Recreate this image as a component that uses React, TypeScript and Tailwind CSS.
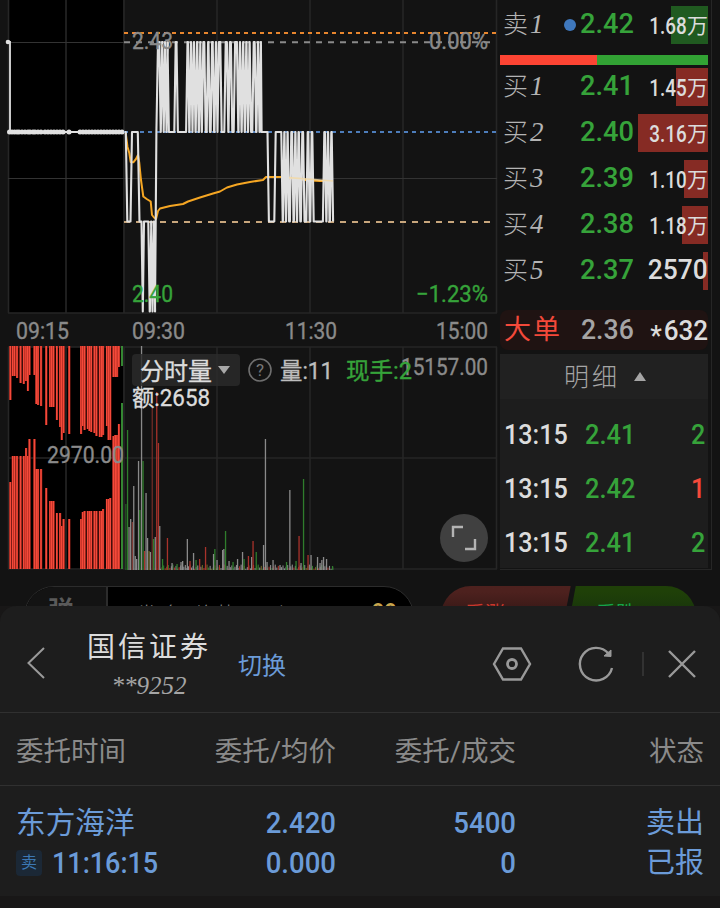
import { Fragment } from 'react';

const GREEN = '#36a33a';
const LINE = '#e0e0e0';
const GRID = '#262626';

const TOP = 42;
const MID = 132;
const LOW = 221.5;
const BOTTOM = 311.5;

// each x is a flip between the two levels of that stretch
const dipFlips = [149, 150.6, 151.8, 153.2, 154.4];

const highFlips = [
  160, 161.5, 163, 164.4, 165.8, 167.2, 168.2, 175, 177.2, 186.8, 188.6, 190.2, 191.8, 193.2, 194.8, 196.4,
  198, 199.6, 201, 202.6, 205, 207.4, 209.2, 211.4, 213.4, 215.2, 216.8, 218.2, 221, 225, 227.6, 229.2,
  231.6, 234.4, 237.6, 239.2, 240.8, 242.4, 244, 245.6, 247.2, 248.8, 250.4, 253, 255.4, 257.2, 258.8, 260.2,
];

const lowFlips = [
  268.2, 275, 282, 283.6, 285.2, 286.8, 288.4, 290.6, 292.8, 294.6, 296.2, 297.8, 299.6, 301.6, 303.8, 307,
  309, 311, 313, 323.6, 325.6, 327.2, 328.8, 330.6, 332.4,
];

const toggles = (xs: number[], from: number, to: number) =>
  xs
    .map((x, i) => {
      const [a, b] = i % 2 === 0 ? [from, to] : [to, from];
      return `L${x - 0.7} ${a} L${x + 0.7} ${b}`;
    })
    .join(' ');

const pricePath = [
  `M125 ${MID} L125.8 ${MID} L127.3 ${LOW} L130.5 ${LOW} L132 ${MID} L137.8 ${MID} L139.5 ${LOW} L141.5 ${LOW}`,
  `L142.8 ${BOTTOM} L144 ${LOW}`,
  toggles(dipFlips, LOW, BOTTOM),
  `L155 ${BOTTOM} L156.4 ${MID} L158 ${TOP}`,
  toggles(highFlips.slice(0, 7), TOP, MID),
  toggles(highFlips.slice(7), MID, TOP),
  `L261.6 ${MID}`,
  toggles(lowFlips, MID, LOW),
].join(' ');

const averagePath =
  'M125.7 133 L127.5 147 L129.3 153 L130.7 162 L133.3 162.3 L136 159 L138 155 L139.3 163 L141 180 L143.3 196.5 L146.7 199 L150.7 201.5 L152 215 L154 217.5 L156 219 L158 211 L160 208.5 L170 206 L183 204 L188 201.5 L200 197.5 L213 193.5 L220 191.5 L227 187.5 L237 184.5 L250 182 L263 180 L266 177 L283 177 L293 178.5 L307 180.3 L320 181 L333 181';

const preDots = [
  9.5, 12, 14.5, 17, 19, 22, 25, 28, 30, 33, 35, 38, 41, 45, 48, 51, 54, 57, 60, 63, 69, 80, 83, 86, 89, 92, 95,
  98, 101, 104, 107, 110, 113, 116, 119, 122,
];

// [x, end of the upper bar, start of the lower bar]
const auction = [
  [10.3, 400, 482], [12.7, 376, 456], [14.5, 376, 456], [17, 378, 456], [20.5, 383, 456], [23.7, 384, 456],
  [26, 381, 448], [27.8, 391, 456], [29.4, 375, 439], [34.4, 375, 439], [36.3, 404, 469], [38, 405, 469],
  [41, 406, 469], [46.2, 425, 488], [50, 407, 501], [51.7, 407, 501], [53.4, 407, 501], [56.8, 420, 513],
  [60, 427, 513], [61.7, 440, 526], [63.5, 433, 519], [69.2, 434, 519], [81, 434, 519], [82.7, 426, 512],
  [84.5, 430, 511], [87.7, 429, 511], [89.4, 431, 511], [91.2, 432, 511], [94.4, 433, 511], [96.4, 436, 511],
  [99.7, 437, 511], [101.4, 437, 511], [103, 435, 509], [106.8, 426, 499], [108.5, 440, 499], [110.2, 440, 498],
  [113.4, 377, 436], [115.2, 377, 435], [117, 377, 435], [118.8, 367, 424],
];

const R = '#a8322b';
const G = '#2f7d2c';
const W = '#8a8a8a';

const volume: [number, number, string][] = [
  [125.8, 504, '#245c22'], [127.5, 430, G], [129, 527, W], [130.6, 519, W], [132.3, 522, '#7c3a35'], [133.7, 486, W],
  [135.2, 556, W], [136.6, 559, W], [138.5, 461, W], [139.8, 510, G], [141.5, 346, W], [143, 461, G],
  [144.6, 551, R], [146, 493, W], [147.5, 538, W], [149, 551, '#6d6424'], [150.4, 552, W], [152.2, 408, '#6e2c27'],
  [153.5, 539, G], [155.2, 537, W], [156.7, 392, R], [158.4, 443, R], [159.7, 526, W], [162.5, 559, G],
  [167.4, 538, R], [172, 563, W], [177, 564, G], [181, 562, W], [182.6, 561, W], [187.3, 539, W],
  [190, 561, R], [193.5, 553, W], [196, 560, G], [199.6, 559, R], [205.5, 547, R], [213.5, 554, W],
  [214.8, 549, G], [217, 560, W], [222.6, 550, W], [223.8, 549, W], [225.5, 531, G], [229, 561, W],
  [233, 562, G], [237.5, 559, W], [242.5, 552, W], [244, 559, G], [248.4, 556, R], [251.6, 557, W],
  [253, 541, R], [256.2, 552, G], [263.5, 545, W], [265.4, 439, W], [267, 562, W], [273, 560, W],
  [280, 565, W], [286.5, 562, G], [289.8, 490, W], [296, 561, G], [299, 536, R], [301, 563, W],
  [303.5, 479, G], [308, 555, R], [311, 555, W], [317.5, 557, W], [320, 563, W], [321.8, 560, W],
  [323.5, 557, W], [326.5, 559, W], [332.5, 566, G],
];

const smallColors = [W, W, G, R, W, '#6d6424', W, R];

const Chart = () => (
  <svg
    viewBox="0 0 499 572"
    className="block h-[572px] w-[499px] shrink-0"
    fontFamily='Roboto, "Noto Sans CJK SC", sans-serif'
    fontSize="23"
  >
    <rect x="9" y="0" width="114" height="313" fill="#000" />
    <rect x="9" y="347" width="114" height="223" fill="#000" />

    {[8.5, 66, 124, 217, 310, 403, 496.5].map((x) => (
      <Fragment key={x}>
        <line x1={x} x2={x} y1="0" y2="313" stroke={GRID} strokeWidth="1.6" />
        <line x1={x} x2={x} y1="347" y2="569" stroke={GRID} strokeWidth="1.6" />
      </Fragment>
    ))}
    <path d="M8 313H497 M8 347H497 M8 458H497 M8 569H497" stroke={GRID} strokeWidth="1.6" />
    <path d="M8 178.5H497 M8 42.5H124" stroke="#333" />

    {/* reference levels */}
    <g strokeWidth="2">
      <path d="M124 33H496" stroke="#e8862e" strokeDasharray="4 4" />
      <path d="M124 42.3H490" stroke="#8a8a8a" strokeDasharray="6 6" />
      <path d="M124 132H496" stroke="#4d7dbb" strokeDasharray="4 4" />
      <path d="M124 222H490" stroke="#c8a67c" strokeDasharray="6 6" />
    </g>

    {/* opening auction price */}
    <path d="M8 42H10V132H123" fill="none" stroke={LINE} strokeWidth="1.8" />
    <circle cx="8" cy="42" r="2.3" fill={LINE} />
    {preDots.map((x) => (
      <circle key={x} cx={x} cy="132" r="2.5" fill={LINE} />
    ))}

    <path d={averagePath} fill="none" stroke="#f5a623" strokeWidth="2" strokeLinejoin="round" />
    <path d={pricePath} fill="none" stroke={LINE} strokeWidth="2.1" strokeLinejoin="round" />
    <path d="M289 177.6L333 181" stroke="#f3d9a4" strokeWidth="1.6" opacity="0.8" />

    <g fill="#8a8a8a" stroke="#8a8a8a" strokeWidth="0.35">
      <text x="132" y="48.5" textLength="41" lengthAdjust="spacingAndGlyphs">2.43</text>
      <text x="429" y="48.5" textLength="59" lengthAdjust="spacingAndGlyphs">0.00%</text>
      <text x="16" y="339" textLength="53" lengthAdjust="spacingAndGlyphs">09:15</text>
      <text x="132" y="339" textLength="53" lengthAdjust="spacingAndGlyphs">09:30</text>
      <text x="285" y="339" textLength="52" lengthAdjust="spacingAndGlyphs">11:30</text>
      <text x="436" y="339" textLength="52" lengthAdjust="spacingAndGlyphs">15:00</text>
    </g>
    <g fill={GREEN} stroke={GREEN} strokeWidth="0.35">
      <text x="132" y="302" textLength="41" lengthAdjust="spacingAndGlyphs">2.40</text>
      <text x="416" y="302" textLength="72" lengthAdjust="spacingAndGlyphs">−1.23%</text>
    </g>

    {/* auction volume */}
    {auction.map(([x, up, down]) => (
      <g key={x}>
        <rect x={x - 1} y="346" width="2.3" height={up - 346} fill="#8d1d14" />
        <rect x={x - 1} y={down} width="2.3" height={569 - down} fill="#8d1d14" />
        <rect x={x - 0.8} y="346" width="1.6" height={up - 346} fill="#f4493a" />
        <rect x={x - 0.8} y={down} width="1.6" height={569 - down} fill="#f4493a" />
      </g>
    ))}
    <path d="M122 346V366M122 403V569" stroke="#3a9538" strokeWidth="1.8" />

    {/* traded volume */}
    {Array.from({ length: 112 }, (_, i) => {
      const x = 160 + i * 1.55;
      const h = 1.2 + ((i * 37) % 11) * 0.42;
      return <rect key={i} x={x} y={570 - h} width="1.1" height={h} fill={smallColors[(i * 5 + (i >> 2)) % 8]} />;
    })}
    {volume.map(([x, y, color]) => (
      <rect key={x} x={x - 0.6} y={y} width="1.3" height={570 - y} fill={color} />
    ))}

    <g fill="#8a8a8a" stroke="#8a8a8a" strokeWidth="0.35">
      <text x="47" y="463" textLength="77" lengthAdjust="spacingAndGlyphs">2970.00</text>
      <text x="401" y="375" textLength="87" lengthAdjust="spacingAndGlyphs">15157.00</text>
    </g>

    {/* volume legend */}
    <rect x="132" y="354" width="108" height="32" rx="4" fill="#2b2b2b" fillOpacity="0.82" />
    <g fill="#dcdcdc" stroke="#dcdcdc" strokeWidth="0.35">
      <text x="140" y="379.5" fontSize="24" textLength="72" lengthAdjust="spacingAndGlyphs">分时量</text>
      <text x="132" y="406" textLength="78" lengthAdjust="spacingAndGlyphs">额:2658</text>
    </g>
    <path d="M218 366H230L224 374Z" fill="#a8a8a8" />
    <circle cx="260" cy="370" r="11" fill="none" stroke="#6e6e6e" strokeWidth="1.6" />
    <text x="260" y="376" fontSize="17" fill="#777" textAnchor="middle">?</text>
    <text x="280" y="379" fill="#bdbdbd" stroke="#bdbdbd" strokeWidth="0.35" textLength="53" lengthAdjust="spacingAndGlyphs">
      量:11
    </text>
    <text x="346" y="379" fill={GREEN} stroke={GREEN} strokeWidth="0.35" textLength="66" lengthAdjust="spacingAndGlyphs">
      现手:2
    </text>

    <circle cx="464" cy="538" r="24" fill="#404040" />
    <path d="M453 537V527H463M475 539V549H465" fill="none" stroke="#b4b4b4" strokeWidth="2.4" />
  </svg>
);

const bids = [
  { n: 1, price: '2.41', vol: '1.45', bar: 'w-8' },
  { n: 2, price: '2.40', vol: '3.16', bar: 'w-[70px]' },
  { n: 3, price: '2.39', vol: '1.10', bar: 'w-6' },
  { n: 4, price: '2.38', vol: '1.18', bar: 'w-[26px]' },
  { n: 5, price: '2.37', vol: '2570', bar: 'w-[5px]' },
];

const trades = [
  { time: '13:15', price: '2.41', vol: '2', color: 'text-[#36a33a]' },
  { time: '13:15', price: '2.42', vol: '1', color: 'text-[#f4493a]' },
  { time: '13:15', price: '2.41', vol: '2', color: 'text-[#36a33a]' },
];

type QuoteProps = { side: string; n: number; price: string; vol: string; bar: string; dot?: boolean };

const Quote = ({ side, n, price, vol, bar, dot }: QuoteProps) => (
  <div className="relative flex h-[38px] items-center pl-[3px]">
    <div className={`absolute inset-y-0 right-0 ${dot ? 'bg-[#205a20]' : 'bg-[#862b24]'} ${bar}`} />
    <span className="w-[61px] pb-0.5 text-[25px] font-light text-[#b4b4b4]">
      {side}
      <span className="pl-0.5 font-['Liberation_Serif'] text-[27px] italic">{n}</span>
    </span>
    {dot && <i className="-mr-3 size-3 shrink-0 rounded-full bg-[#3f78bd]" />}
    <span className="ml-4 w-[52px] origin-left scale-x-[0.97] pb-0.5 text-[28px] font-medium text-[#36a33a]">
      {price}
    </span>
    <span className="relative ml-auto flex items-center text-[#dcdcdc]">
      {vol.includes('.') ? (
        <>
          <span className="origin-right scale-x-[0.82] pt-1 text-[23px] font-medium">{vol}</span>
          <span className="pt-1 text-[21px]">万</span>
        </>
      ) : (
        <span className="origin-right scale-x-[0.94] pb-0.5 text-[28px] font-medium">{vol}</span>
      )}
    </span>
  </div>
);

const OrderBook = () => (
  <div className="ml-px h-[570px] w-[212px] border-r border-b border-[#262626]">
    <div className="w-[208px] pt-1.5">
      <Quote side="卖" n={1} price="2.42" vol="1.68" bar="w-[37px]" dot />
      <div className="mt-[11px] mb-[3px] flex h-[10px]">
        <div className="w-[97px] bg-[#fd4433]" />
        <div className="flex-1 bg-[#32a234]" />
      </div>
      <div className="flex flex-col gap-2">
        {bids.map((bid) => (
          <Quote key={bid.n} side="买" {...bid} />
        ))}
      </div>
      <div className="mt-5 flex h-10 items-center rounded-lg bg-[#1f1312] pl-1 text-[28px] font-medium">
        <span className="w-[77px] text-[27px] font-normal tracking-[2px] text-[#f4493a]">大单</span>
        <span className="w-[56px] origin-left scale-x-[0.95] text-[#a5a5a5]">2.36</span>
        <span className="ml-auto origin-right scale-x-[0.93] pt-px text-[#dcdcdc]">
          <span className="inline-block pr-0.5 align-[-5px] text-[28px] leading-6">*</span>632
        </span>
      </div>
      <div className="mt-1 flex h-[45px] items-center justify-center gap-3.5 bg-[#212121] pl-0.5 text-[#a5a5a5]">
        <span className="pt-0.5 text-[25px] font-light tracking-[3px]">明细</span>
        <svg viewBox="0 0 12 9" className="w-3">
          <path d="M6 0L12 9H0Z" fill="currentColor" />
        </svg>
      </div>
      <div className="h-[169px] bg-[#1d1d1d] pt-[9px]">
        {trades.map((trade, i) => (
          <div key={i} className="flex h-[54px] items-center pr-[3px] pl-1 text-[27px] font-medium">
            <span className="w-[81px] origin-left scale-x-[0.93] text-[#dcdcdc]">{trade.time}</span>
            <span className="origin-left scale-x-[0.94] text-[#36a33a]">{trade.price}</span>
            <span className={`ml-auto origin-right scale-x-[0.93] ${trade.color}`}>{trade.vol}</span>
          </div>
        ))}
      </div>
    </div>
  </div>
);

const DanmakuBar = () => (
  <div className="flex h-[34px] items-start overflow-hidden pt-3.5 pl-6">
    <div className="flex h-[60px] w-[390px] shrink-0 overflow-hidden rounded-full border border-[#2c2c2c] bg-black">
      <div className="w-[83px] shrink-0 border-r-2 border-[#2c2c2c] bg-[#131313] pt-2 pl-[23px] text-[26px] leading-8 font-bold text-[#5a5a5a]">
        弹
      </div>
      <div className="flex-1 pt-[15px] pl-7 text-[22px] leading-7 font-light tracking-[4px] whitespace-nowrap text-[#8a8a8a]">
        发条弹幕互动一下
      </div>
      <div className="pt-[13px] pr-4 text-[22px] leading-6 font-bold text-[#c9a64e]">99</div>
    </div>
    <div className="ml-[27px] flex h-[60px] w-[255px] overflow-hidden rounded-full text-[20px]">
      <div className="w-[131px] bg-linear-to-b from-[#4d211e] from-10% to-[#3a1917] to-40% pt-3.5 pl-6 leading-7 text-[#c9372c] [clip-path:polygon(0_0,99%_0,90%_100%,0_100%)]">
        看涨 44%
      </div>
      <div className="flex-1 bg-linear-to-b from-[#1f4008] from-10% to-[#19360b] to-40% pt-3.5 pl-6 leading-7 text-[#16a34a] [clip-path:polygon(3%_0,100%_0,100%_100%,-6%_100%)]">
        看跌 56%
      </div>
    </div>
  </div>
);

const SheetHeader = () => (
  <div className="flex h-[107px] items-center border-b border-[#303030]">
    <svg viewBox="0 0 20 32" className="mt-2 ml-[26px] h-8 w-5" fill="none" stroke="#9a9a9a" strokeWidth="2">
      <path d="M18 1L2.5 16L18 31" />
    </svg>
    <div className="mt-3.5 ml-10 flex w-[126px] flex-col items-center">
      <span className="text-[28px] leading-10 tracking-[3px] whitespace-nowrap text-[#dcdcdc]">国信证券</span>
      <span className="font-['Liberation_Serif'] text-[25px] leading-9 text-[#a5a5a5] italic">**9252</span>
    </div>
    <span className="mt-3.5 ml-[26px] text-[24px] text-[#6b9bd8]">切换</span>
    <svg viewBox="0 0 220 48" className="mt-2.5 ml-auto h-12 w-[220px]" fill="none" stroke="#999" strokeWidth="2.4">
      <path d="M3 24L12 8.5H30L39 24L30 39.5H12Z" />
      <circle cx="21" cy="24" r="4.5" strokeWidth="2.8" />
      <path d="M117.5 13.5A16.3 16.3 0 1 0 121 28" />
      <path d="M113 16L120 10V16.5Z" fill="#999" strokeWidth="1" />
      <path d="M152 12V36" stroke="#3a3a3a" strokeWidth="1.5" />
      <path d="M178 11L204 37M204 11L178 37" />
    </svg>
    <div className="w-[9px]" />
  </div>
);

const OrderSheet = () => (
  <div className="h-[290px] rounded-t-2xl bg-[#1d1d1d]">
    <SheetHeader />
    <div className="grid h-[73px] grid-cols-[160px_160px_180px_188px] items-center border-b border-[#303030] px-4 pt-1.5 text-[27.5px] text-[#8a8a8a]">
      <span>委托时间</span>
      <span className="text-right">委托/均价</span>
      <span className="text-right">委托/成交</span>
      <span className="text-right">状态</span>
    </div>
    <div className="grid grid-cols-[160px_160px_180px_188px] px-4 pt-[17px] text-[29px] leading-10 font-medium text-[#6b9bd8]">
      <span className="text-[29.7px] font-normal whitespace-nowrap">东方海洋</span>
      <span className="origin-right scale-x-[0.95] text-right">2.420</span>
      <span className="origin-right scale-x-[0.95] text-right">5400</span>
      <span className="text-right font-normal">卖出</span>
      <span className="flex items-center gap-2.5">
        <i className="flex size-[26px] shrink-0 items-center justify-center rounded-sm bg-[#1b2836] text-base font-normal text-[#3c78b4] not-italic">
          卖
        </i>
        <span className="origin-left scale-x-[0.93]">11:16:15</span>
      </span>
      <span className="origin-right scale-x-[0.95] text-right">0.000</span>
      <span className="origin-right scale-x-[0.95] text-right">0</span>
      <span className="text-right font-normal">已报</span>
    </div>
  </div>
);

const App = () => (
  <div className="h-[908px] w-[720px] overflow-hidden bg-[#181717] font-[Roboto,'Noto_Sans_CJK_SC',sans-serif]">
    <div className="h-[606px] bg-[#131313]">
      <div className="flex">
        <Chart />
        <OrderBook />
      </div>
      <DanmakuBar />
    </div>
    <OrderSheet />
  </div>
);

export default App;
